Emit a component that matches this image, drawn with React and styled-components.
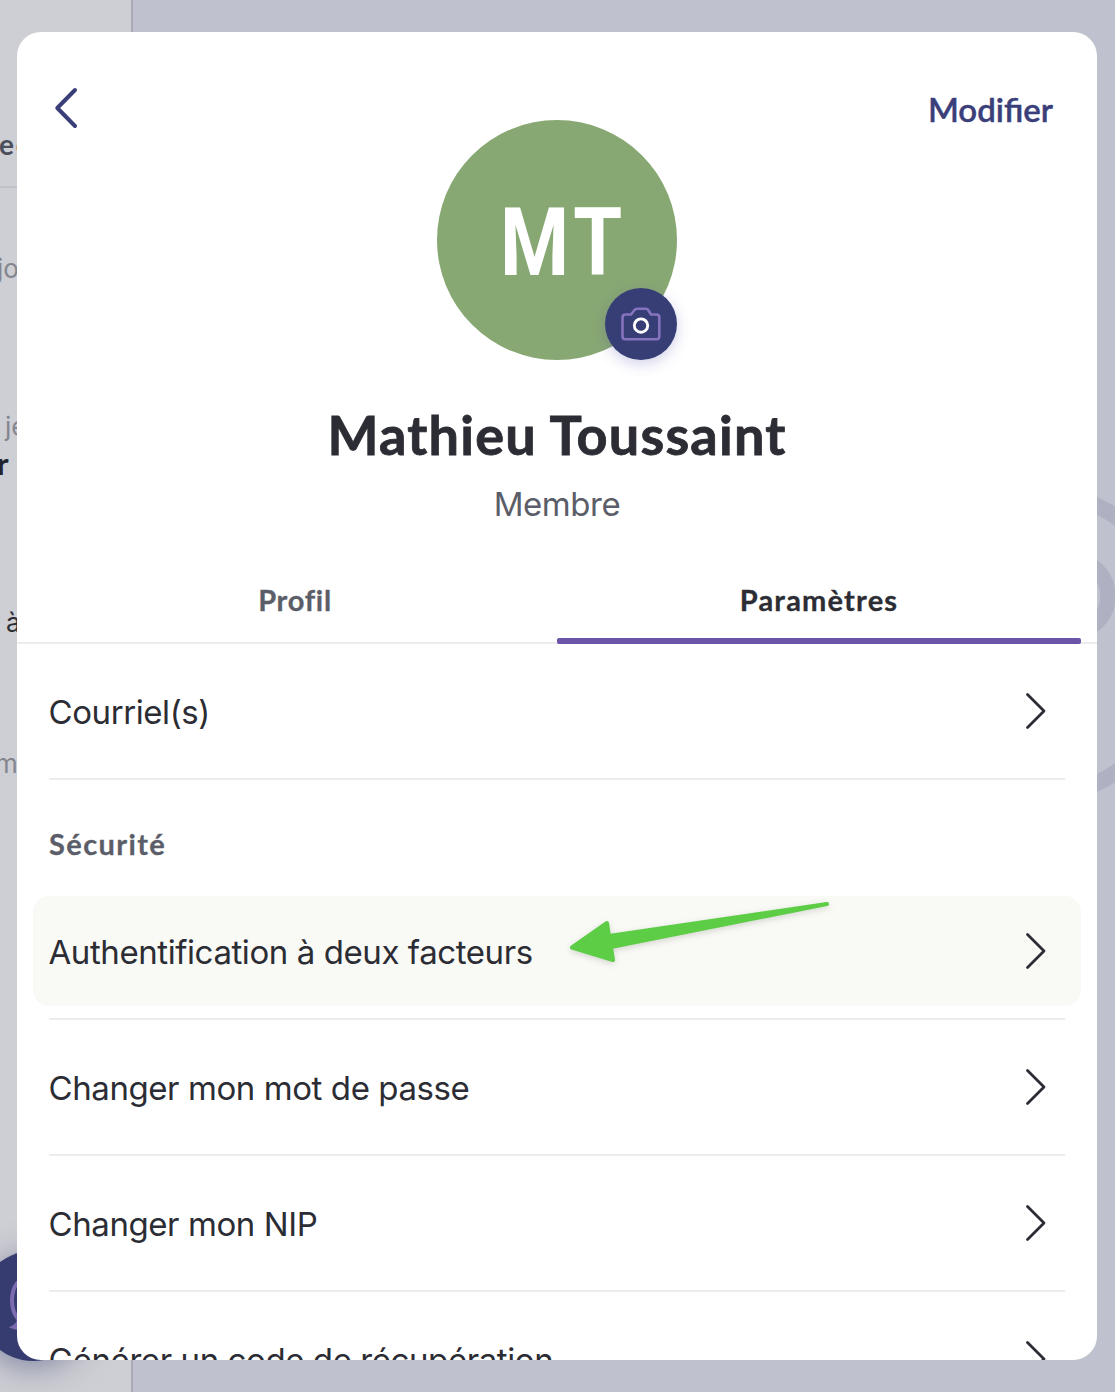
import React from 'react';
import styled, { createGlobalStyle } from 'styled-components';

const display = '"Lato", "Open Sans", sans-serif';
const body = '"Inter", "Liberation Sans", sans-serif';

const GlobalStyle = createGlobalStyle`
  *, *::before, *::after { box-sizing: border-box; }
  body { margin: 0; overflow: hidden; background: #bfc1ce; font-family: ${body}; }
  h1, p, h2 { margin: 0; }
  button { border: 0; padding: 0; background: none; font: inherit; color: inherit; text-align: left; }
`;

const Screen = styled.div`
  position: relative;
  display: flex;
  width: 1115px;
  height: 1392px;
  overflow: hidden;
`;

const Sidebar = styled.aside`
  display: flex;
  flex-direction: column;
  width: 133px;
  height: 100%;
  background: #cecfd4;
  border-right: 2px solid #a9aab5;
  overflow: hidden;
`;

const SidebarHeader = styled.div`
  height: 188px;
  padding-top: 124px;
  border-bottom: 2px solid #c0c1c8;
`;

const Snippet = styled.div`
  height: ${p => p.$height}px;
  flex: none;
  margin-left: ${p => p.$indent}px;
  padding-top: ${p => p.$top || 0}px;
  font-family: ${p => (p.$bold ? display : body)};
  font-size: ${p => p.$size || 26}px;
  font-weight: ${p => (p.$bold ? 700 : 400)};
  line-height: 40px;
  letter-spacing: ${p => p.$tracking || 0}px;
  white-space: nowrap;
  color: ${p => p.$color};
`;

const ChatButton = styled.button`
  position: absolute;
  left: -22px;
  top: 1251px;
  width: 110px;
  height: 110px;
  border-radius: 50%;
  background: #363c70;
  box-shadow: 0 6px 32px rgba(54, 60, 112, 0.5);
`;

const Watermark = styled.svg`
  position: absolute;
  right: 0;
  top: 480px;
`;

const Modal = styled.section`
  position: absolute;
  left: 17px;
  top: 32px;
  width: 1080px;
  height: 1328px;
  border-radius: 24px;
  background: #fff;
  overflow: hidden;
`;

const Header = styled.header`
  display: grid;
  grid-template-columns: 1fr 240px 1fr;
  height: 328px;
  padding: 0 44px 0 36px;
`;

const BackButton = styled.button`
  width: 26px;
  height: 44px;
  margin-top: 54px;
`;

const EditButton = styled.button`
  justify-self: end;
  height: 44px;
  margin-top: 55px;
  font-family: ${display};
  font-size: 33px;
  font-weight: 600;
  line-height: 44px;
  color: #3a3f7a;
  -webkit-text-stroke: 0.4px;
`;

const Avatar = styled.div`
  position: relative;
  display: flex;
  align-items: center;
  justify-content: center;
  width: 240px;
  height: 240px;
  margin: 88px 0 0 4px;
  border-radius: 50%;
  background: #88a873;
`;

const Initials = styled.span`
  margin-left: 14px;
  padding-top: 5px;
  font-family: "Roboto", "Liberation Sans", sans-serif;
  font-size: 94px;
  font-weight: 700;
  line-height: 1;
  letter-spacing: 6px;
  color: #fff;
  transform: scaleX(0.84);
`;

const CameraButton = styled.button`
  position: absolute;
  right: 0;
  bottom: 0;
  width: 72px;
  height: 72px;
  border-radius: 50%;
  background: #373e76;
  box-shadow: 0 4px 14px rgba(76, 70, 170, 0.25);
  svg { display: block; }
`;

const Identity = styled.div`
  display: flex;
  flex-direction: column;
  align-items: center;
  height: 200px;
  padding-top: 39px;
`;

const Name = styled.h1`
  font-family: ${display};
  font-size: 54px;
  font-weight: 700;
  line-height: 72px;
  letter-spacing: 1.2px;
  color: #2c2d34;
  -webkit-text-stroke: 0.8px #2c2d34;
`;

const Role = styled.p`
  margin-top: 13px;
  font-size: 33px;
  line-height: 40px;
  letter-spacing: -0.45px;
  color: #5b5e68;
`;

const Tabs = styled.nav`
  display: grid;
  grid-template-columns: 1fr 1fr;
  height: 84px;
  padding: 0 16px;
  box-shadow: inset 0 -2px #ececec;
`;

const Tab = styled.button`
  display: flex;
  flex-direction: column;
  justify-content: space-between;
  align-items: center;
  padding-top: 20px;
  font-family: ${display};
  font-size: 29px;
  font-weight: 700;
  line-height: 40px;
  letter-spacing: ${p => (p.$active ? 1.2 : 0.7)}px;
  color: ${p => (p.$active ? '#2c2d34' : '#5b5e68')};
  -webkit-text-stroke: 0.3px;
  &::after {
    content: '';
    width: 100%;
    height: 6px;
    border-radius: 2px;
    background: ${p => (p.$active ? '#6b55a8' : 'transparent')};
  }
`;

const List = styled.div`
  display: flex;
  flex-direction: column;
  padding: 0 32px;
`;

const Item = styled.div`
  flex: none;
  height: 136px;
  padding: 12px 0;
  border-bottom: 2px solid #ececed;
`;

const ItemButton = styled.button`
  display: flex;
  align-items: center;
  justify-content: space-between;
  width: calc(100% + 32px);
  height: 110px;
  margin: 0 -16px;
  padding: 1px 33px 0 15.5px;
  border-radius: 16px;
  background: ${p => (p.$highlighted ? '#f9faf6' : 'transparent')};
  font-size: 33px;
  line-height: 44px;
  letter-spacing: -0.42px;
  color: #2c2d34;
  svg { margin-top: -1px; }
`;

const SectionTitle = styled.h2`
  height: 104px;
  padding-top: 44px;
  font-family: ${display};
  font-size: 29px;
  font-weight: 700;
  line-height: 40px;
  letter-spacing: 1.4px;
  color: #5b5e68;
  -webkit-text-stroke: 0.3px;
`;

const Arrow = styled.svg`
  position: absolute;
  left: 560px;
  top: 890px;
  filter: drop-shadow(0 2px 3px rgba(0, 0, 0, 0.15));
`;

const Chevron = () => (
  <svg width="24" height="40" viewBox="0 0 24 40" fill="none">
    <path d="M3.5 3.5L20 20L3.5 36.5" stroke="#2c2d34" strokeWidth="2.8" strokeLinecap="round" strokeLinejoin="round" />
  </svg>
);

const Row = ({ children, highlighted }) => (
  <Item>
    <ItemButton $highlighted={highlighted}>
      <span>{children}</span>
      <Chevron />
    </ItemButton>
  </Item>
);

export default function App() {
  return (
    <Screen>
      <GlobalStyle />
      <Sidebar>
        <SidebarHeader>
          <Snippet $height={40} $indent={-1} $size={28} $tracking={1.8} $bold $color="#4b4f5c">ec</Snippet>
        </SidebarHeader>
        <Snippet $height={159} $top={61} $indent={-3} $color="#83868e">jo</Snippet>
        <Snippet $height={96} $top={60} $indent={5} $color="#83868e">je</Snippet>
        <Snippet $height={100} $indent={-3} $size={31} $bold $color="#23242e">r</Snippet>
        <Snippet $height={140} $top={60} $indent={6} $color="#2c2d34">à</Snippet>
        <Snippet $height={101} $top={61} $indent={-5} $color="#83868e">m</Snippet>
      </Sidebar>
      <Watermark width="18" height="330" viewBox="1097 480 18 330" fill="none" stroke="#afb0c2">
        <circle cx="1030" cy="644.5" r="154" strokeWidth="16" />
        <circle cx="1072" cy="596" r="36" strokeWidth="15.5" />
      </Watermark>
      <ChatButton>
        <svg width="108" height="108" viewBox="0 0 108 108" fill="none" stroke="#7c6bb0" strokeWidth="4" strokeLinecap="round">
          <path d="M54 25C41 25 34 36 34 49C34 59 37 65 41 69C40 73 38 75 36 76C42 78 48 76 52 73" />
        </svg>
      </ChatButton>
      <Modal>
        <Header>
          <BackButton aria-label="Retour">
            <svg width="26" height="44" viewBox="0 0 26 44" fill="none">
              <path d="M22 4L4.3 22L22 40" stroke="#3a3f7a" strokeWidth="4" strokeLinecap="round" strokeLinejoin="round" />
            </svg>
          </BackButton>
          <Avatar>
            <Initials>MT</Initials>
            <CameraButton aria-label="Photo">
              <svg width="72" height="72" viewBox="0 0 72 72" fill="none">
                <path d="M20.5 26.5H26L29.5 22Q30.3 20.8 32 20.8H41Q42.5 20.8 43.2 22L46 26.5H51.5Q54.3 26.5 54.3 29.3V48.5Q54.3 51.3 51.5 51.3H20.5Q17.5 51.3 17.5 48.5V29.5Q17.5 26.5 20.5 26.5Z" stroke="#8673bf" strokeWidth="2.6" strokeLinejoin="round" />
                <circle cx="36" cy="37.6" r="6.7" stroke="#fff" strokeWidth="2.9" />
              </svg>
            </CameraButton>
          </Avatar>
          <EditButton>Modifier</EditButton>
        </Header>
        <Identity>
          <Name>Mathieu Toussaint</Name>
          <Role>Membre</Role>
        </Identity>
        <Tabs>
          <Tab>Profil</Tab>
          <Tab $active>Paramètres</Tab>
        </Tabs>
        <List>
          <Row>Courriel(s)</Row>
          <SectionTitle>Sécurité</SectionTitle>
          <Row highlighted>Authentification à deux facteurs</Row>
          <Row>Changer mon mot de passe</Row>
          <Row>Changer mon NIP</Row>
          <Row>Générer un code de récupération</Row>
        </List>
      </Modal>
      <Arrow width="280" height="85" viewBox="560 890 280 85">
        <path d="M572 947.5L607 923L609 936L827 904L611 947L613 960Z" fill="#5dcd46" stroke="#5dcd46" strokeWidth="4" strokeLinejoin="round" />
      </Arrow>
    </Screen>
  );
}
